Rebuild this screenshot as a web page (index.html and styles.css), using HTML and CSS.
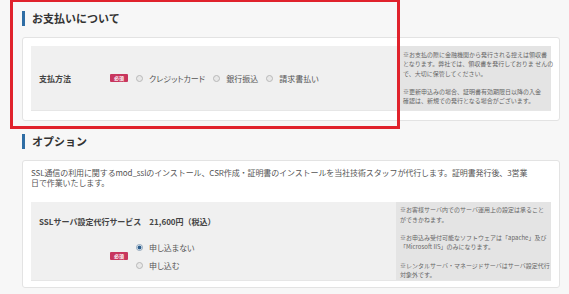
FILE: index.html
```html
<!DOCTYPE html>
<html lang="ja">
<head>
    <meta charset="UTF-8">
    <meta name="viewport" content="width=device-width, initial-scale=1.0">
    <title>お支払い・オプション</title>
    <link rel="stylesheet" href="styles.css">
</head>
<body>
    <div class="page">
        <div class="highlight"></div>

        <section class="section">
            <h2 class="section-title">お支払いについて</h2>
            <div class="card">
                <div class="form-row">
                    <div class="form-main form-main-inline">
                        <span class="field-label">支払方法</span>
                        <span class="badge">必須</span>
                        <label class="choice"><input type="radio" name="payment">クレジットカード</label>
                        <label class="choice"><input type="radio" name="payment">銀行振込</label>
                        <label class="choice"><input type="radio" name="payment">請求書払い</label>
                    </div>
                    <div class="form-note note-payment">
                        <p>※お支払の際に金融機関から発行される控えは領収書<br>となります。弊社では、領収書を発行しておりま せんの<br>で、大切に保管してください。</p>
                        <p>※更新申込みの場合、証明書有効期限日以降の入金<br>確認は、新規での発行となる場合がございます。</p>
                    </div>
                </div>
            </div>
        </section>

        <section class="section section-option">
            <h2 class="section-title">オプション</h2>
            <div class="card">
                <p class="lead">SSL通信の利用に関するmod_sslのインストール、CSR作成・証明書のインストールを当社技術スタッフが代行します。証明書発行後、3営業<br>日で作業いたします。</p>
                <div class="form-row">
                    <div class="form-main form-main-stack">
                        <div class="service-title">SSLサーバ設定代行サービス　21,600円（税込）</div>
                        <div class="option-group">
                            <span class="badge">必須</span>
                            <div class="choice-list">
                                <label class="choice"><input type="radio" name="setup" checked>申し込まない</label>
                                <label class="choice"><input type="radio" name="setup">申し込む</label>
                            </div>
                        </div>
                    </div>
                    <div class="form-note note-option">
                        <p>※お客様サーバ内でのサーバ運用上の設定は承ること<br>ができかねます。</p>
                        <p>※お申込み受付可能なソフトウェアは「apache」及び<br>「Microsoft IIS」のみになります。</p>
                        <p>※レンタルサーバ・マネージドサーバはサーバ設定代行<br>対象外です。</p>
                    </div>
                </div>
            </div>
        </section>
    </div>
</body>
</html>
```

FILE: styles.css
```css
* {
    margin: 0;
    padding: 0;
    box-sizing: border-box;
}

body {
    font-family: "Noto Sans CJK JP", "Liberation Sans", sans-serif;
    background: #f7f7f7;
    color: #555;
}

.page {
    position: relative;
    padding: 11px 9px 0 22px;
}

/* 赤枠（注目箇所） */
.highlight {
    position: absolute;
    left: 10px;
    top: -1px;
    width: 390px;
    height: 130px;
    border: 3px solid #e0222c;
    pointer-events: none;
}

.section-option {
    margin-top: 13px;
}

.section-title {
    border-left: 3px solid #2f6da4;
    padding-left: 7px;
    height: 15px;
    line-height: 15px;
    font-size: 11px;
    font-weight: bold;
    color: #333;
    margin-bottom: 11px;
}

.card {
    background: #fff;
    border: 1px solid #e3e3e3;
    border-radius: 3px;
    padding: 8px 8px 9px;
}

.section-option .card {
    padding: 7px 8px 6px;
}

.lead {
    font-size: 8px;
    line-height: 10px;
    letter-spacing: -0.1px;
    color: #555;
    white-space: nowrap;
    margin-bottom: 14px;
}

.form-row {
    display: flex;
    border-bottom: 1px solid #e6e6e6;
}

.form-main {
    flex: 1;
    background: #f0f0f0;
}

.form-main-inline {
    display: flex;
    align-items: center;
    padding-left: 8px;
}

.form-main-stack {
    padding: 14px 8px 0;
}

.field-label {
    width: 71px;
    font-size: 8px;
    font-weight: bold;
    color: #444;
}

.service-title {
    font-size: 8px;
    line-height: 12px;
    font-weight: bold;
    color: #444;
}

.badge {
    display: inline-block;
    width: 18px;
    height: 8px;
    line-height: 8px;
    background: #c8365e;
    color: #fff;
    font-size: 5px;
    font-weight: bold;
    text-align: center;
    border-radius: 1px;
    margin-right: 8px;
}

.choice {
    display: flex;
    align-items: center;
    gap: 6px;
    margin-right: 8px;
    font-size: 8px;
    color: #555;
    font-feature-settings: "palt";
}

.choice input[type="radio"] {
    appearance: none;
    -webkit-appearance: none;
    width: 7px;
    height: 7px;
    margin: 0;
    border: 1px solid #b8b8b8;
    border-radius: 50%;
    background: #e8e8e8;
}

.choice input[type="radio"]:checked {
    border-color: #8fa6bb;
    background: radial-gradient(circle, #2c5d8c 0 1.6px, #dde6ee 2.2px);
}

.option-group {
    display: flex;
    align-items: center;
    margin-top: 10px;
    padding-left: 71px;
}

.choice-list .choice {
    height: 18px;
}

.form-note {
    background: #e4e4e4;
    color: #666;
    font-size: 6px;
    line-height: 9.3px;
    white-space: nowrap;
}

.note-payment {
    width: 151px;
    padding: 4px 3px 5px;
}

.note-option {
    width: 155px;
    padding: 3px 4px 1px;
}

.form-note p + p {
    margin-top: 9px;
}
```
